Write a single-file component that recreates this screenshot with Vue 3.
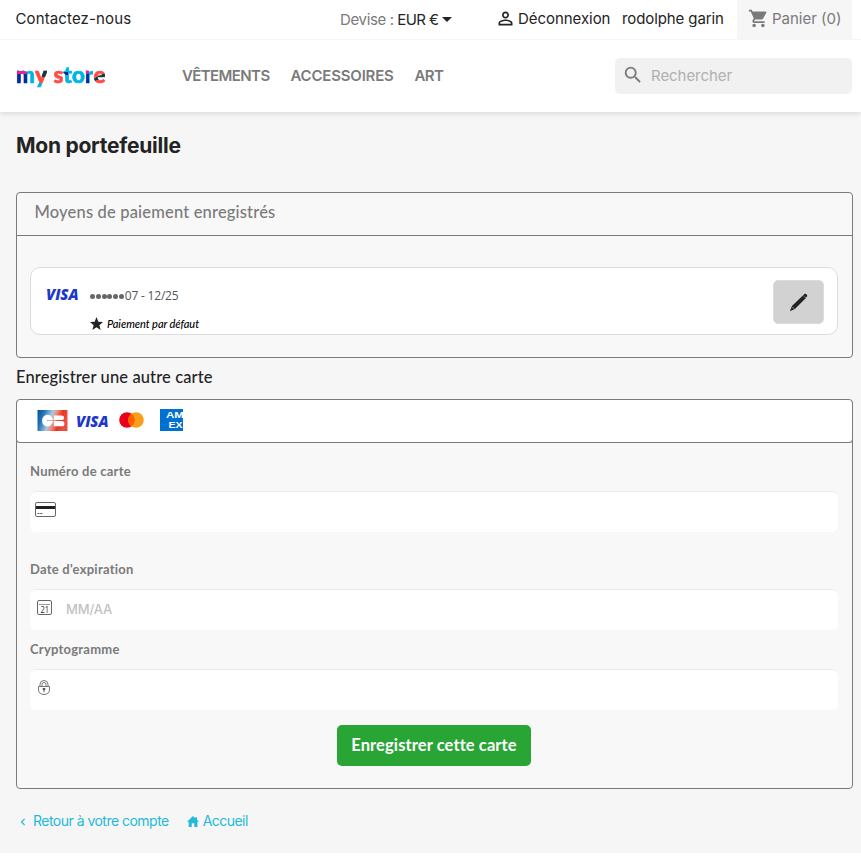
<script setup>
import { ref } from 'vue'

const menu = ['VÊTEMENTS', 'ACCESSOIRES', 'ART']
const logo = ['m', 'y', 's', 't', 'o', 'r', 'e']
const number = ref('')
const expiry = ref('')
const crypto = ref('')
const search = ref('')
</script>

<template>
  <div class="page">
    <header class="header">
      <div class="topbar">
        <a class="contact">Contactez-nous</a>
        <div class="currency"><span class="muted t-devise">Devise :</span><span class="t-eur">EUR €</span><i class="caret"></i></div>
        <div class="user">
          <svg class="person" viewBox="0 0 24 24"><path fill-rule="evenodd" d="M12 5.900a2.100 2.100 0 1 1 0 4.200 2.100 2.100 0 0 1 0-4.200M12 4C9.790 4 8 5.790 8 8s1.790 4 4 4 4-1.790 4-4-1.790-4-4-4zm0 10.900c2.970 0 6.100 1.460 6.100 2.100v1.100H5.900V17c0-.640 3.130-2.100 6.100-2.100M12 13c-2.670 0-8 1.340-8 4v3h16v-3c0-2.660-5.330-4-8-4z"/></svg>
          <a class="t-logout">Déconnexion</a>
        </div>
        <a class="account">rodolphe garin</a>
        <div class="cart">
          <svg class="cart-icon" viewBox="0 0 24 24"><path d="M7 18c-1.100 0-1.990.900-1.990 2S5.900 22 7 22s2-.900 2-2-.900-2-2-2zM1 2v2h2l3.600 7.590-1.350 2.450c-.160.280-.250.610-.250.960 0 1.100.900 2 2 2h12v-2H7.420c-.140 0-.250-.110-.250-.250l.030-.120.900-1.630h7.450c.750 0 1.410-.410 1.750-1.030l3.580-6.490A1 1 0 0 0 20 4H5.210l-.940-2H1zm16 16c-1.100 0-1.990.900-1.990 2s.890 2 1.990 2 2-.900 2-2-.900-2-2-2z"/></svg>
          <span>Panier (0)</span>
        </div>
      </div>
      <div class="mainbar">
        <a class="logo"><span v-for="l in logo" :key="l" :class="['ltr', 'ltr-' + l]">{{ l }}</span></a>
        <nav class="menu"><a v-for="(m, i) in menu" :key="m" :class="'item' + i">{{ m }}</a></nav>
        <label class="search">
          <svg viewBox="0 0 24 24"><path d="M15.500 14h-.790l-.280-.270A6.470 6.470 0 0 0 16 9.500 6.500 6.500 0 1 0 9.500 16c1.610 0 3.090-.590 4.230-1.570l.270.280v.790l5 4.990L20.490 19l-4.990-5zm-6 0a4.500 4.500 0 1 1 0-9 4.500 4.500 0 0 1 0 9z"/></svg>
          <input v-model="search" placeholder="Rechercher" />
        </label>
      </div>
    </header>

    <main class="wrapper">
      <h1>Mon portefeuille</h1>

      <section class="card saved">
        <div class="card-head">Moyens de paiement enregistrés</div>
        <div class="method">
          <span class="visa">VISA</span>
          <div class="info">
            <div class="num"><i v-for="n in 6" :key="n" class="dot"></i><span>07 - 12/25</span></div>
            <div class="default">
              <svg viewBox="0 0 24 24"><path d="M12 0l3.400 8.700 8.600.500-6.700 5.800 2.300 9L12 19l-7.600 5 2.300-9L0 9.200l8.600-.500z"/></svg>
              <em>Paiement par défaut</em>
            </div>
          </div>
          <button class="edit">
            <svg viewBox="0 0 20 20"><path d="M15.900 1.200c.700-.700 1.500-.600 2.100-.100l.800.800c.500.600.600 1.400-.100 2.100l-1.200 1.100-2.700-2.800zM14.600 2.500l3 3L6.200 16.900 1 19.200l2.100-5.500z"/><path class="glint" d="M3.300 14.500l2.100 2.100"/></svg>
          </button>
        </div>
      </section>

      <h2>Enregistrer une autre carte</h2>

      <section class="card form">
        <div class="brands">
          <svg class="cb" viewBox="0 0 30 21">
            <defs>
              <linearGradient id="cbg" x1="0" y1="0" x2="1" y2=".25"><stop offset="0" stop-color="#0b4f96"/><stop offset=".22" stop-color="#2072b8"/><stop offset=".5" stop-color="#a9cbe2"/><stop offset=".64" stop-color="#f08a78"/><stop offset=".82" stop-color="#ea3323"/><stop offset="1" stop-color="#e8503f"/></linearGradient>
            </defs>
            <rect width="30" height="21" fill="url(#cbg)"/>
            <path fill="#fff" d="M9.500 4.700c3 0 5.300 1.700 6 5.300H9.500v1h6c-.700 3.500-3 5.500-6 5.500a6 6 0 0 1 0-11.800zM16.300 5.500h8a2.300 2.300 0 0 1 0 4.600h-8zM16.300 11.100h8a2.600 2.600 0 0 1 0 5.200h-8z"/>
          </svg>
          <span class="visa">VISA</span>
          <svg class="mc" viewBox="0 0 25 16"><circle cx="8" cy="8" r="7.800" fill="#eb001b"/><circle cx="17" cy="8" r="7.800" fill="#f79e1b"/><path fill="#ff5f00" d="M12.500 1.600a7.800 7.800 0 0 1 0 12.800 7.800 7.800 0 0 1 0-12.800z"/></svg>
          <svg class="amex" viewBox="0 0 23 22"><rect width="23" height="22" fill="#0070d1"/><text x="6" y="9.300" textLength="18" lengthAdjust="spacingAndGlyphs">AM</text><text x="8.500" y="18.500" textLength="14" lengthAdjust="spacingAndGlyphs">EX</text></svg>
        </div>
        <div class="fields">
          <label class="lbl">Numéro de carte</label>
          <div class="field f1">
            <svg class="i-card" viewBox="0 0 21 15"><rect x=".5" y=".5" width="20" height="14" rx="1.500" fill="#fff" stroke="#666"/><path fill="#222" d="M1 4h19v3H1z"/><path stroke="#555" stroke-dasharray="2 .8" d="M2.500 11.500h5.500"/></svg>
            <input v-model="number" />
          </div>
          <label class="lbl">Date d'expiration</label>
          <div class="field f2">
            <svg class="i-cal" viewBox="0 0 15 15"><rect x=".5" y=".5" width="14" height="14" rx="1.500" fill="#fff" stroke="#666"/><path stroke="#999" d="M2 4.500h11"/><text x="3.500" y="12.500" textLength="8.500" lengthAdjust="spacingAndGlyphs">21</text></svg>
            <input v-model="expiry" placeholder="MM/AA" />
          </div>
          <label class="lbl">Cryptogramme</label>
          <div class="field f3">
            <svg class="i-lock" viewBox="0 0 12 15"><path fill="none" stroke="#777" d="M.5 6.500h11v3.500c0 2.500-2.500 4.500-5.500 4.500S.5 12.500.5 10zM2 6V4.500a4 4 0 0 1 8 0V6M4 6V4.500a2 2 0 0 1 4 0V6"/><path fill="none" stroke="#555" d="M5 8.500h2v1H5zM6 9.500v2.700"/></svg>
            <input v-model="crypto" />
          </div>
          <button class="submit">Enregistrer cette carte</button>
        </div>
      </section>

      <footer class="links">
        <a class="back"><svg class="chev" viewBox="0 0 6 8"><path fill="none" stroke="currentColor" stroke-width="1.200" d="M4.600 1L1.500 4l3.100 3"/></svg><span>Retour à votre compte</span></a>
        <a class="home"><svg viewBox="0 0 12 11"><path fill="currentColor" d="M6 0l2.300 2.200V1.200h1.700v2.600l2 1.900h-1.600V11H7.300V7.300H4.700V11H1.700V5.700H0z"/></svg><span>Accueil</span></a>
      </footer>
    </main>
  </div>
</template>

<style>
body { background: #fff; }
</style>

<style scoped>
* { box-sizing: border-box; }
.page { width: 861px; height: 868px; overflow: hidden; font-family: Inter, "Liberation Sans", sans-serif; color: #232323; white-space: nowrap; }
input, button { font: inherit; border: 0; padding: 0; margin: 0; background: none; outline: 0; min-width: 0; }
svg { display: block; flex: none; }
.header { position: relative; height: 112px; background: #fff; box-shadow: 0 2px 5px rgba(0, 0, 0, .11); }
.topbar { height: 40px; display: flex; border-bottom: 1px solid #f5f5f5; padding: 0 9px 0 15.500px; font-size: 15px; line-height: 37px; }
.muted { color: #7a7a7a; }
.contact { width: 324.500px; letter-spacing: .13px; }
.currency { width: 156px; display: flex; align-items: center; gap: 3.500px; height: 38px; }
.t-devise { letter-spacing: -.35px; }
.t-eur { letter-spacing: -.55px; }
.caret { border: 5px solid transparent; border-top-color: #232323; border-bottom: 0; }
.user { display: flex; width: 126px; gap: 3px; }
.person { width: 21px; height: 21px; margin: 8px -.5px 0 -1.500px; fill: #232323; }
.t-logout { letter-spacing: -.05px; }
.account { letter-spacing: -.1px; flex: 1; }
.cart { width: 115px; height: 39px; background: #f6f6f6; color: #7a7a7a; display: flex; padding-left: 11px; gap: 3px; }
.cart-icon { width: 21px; height: 21px; margin-top: 8px; fill: #7a7a7a; }
.mainbar { height: 72px; display: flex; padding: 0 9px 0 16px; }
.logo { width: 166px; display: flex; align-items: flex-start; font: 900 22.500px/30px Lato, sans-serif; padding-top: 20px; }
.ltr { background-clip: text; -webkit-background-clip: text; color: transparent; -webkit-text-stroke: .7px transparent; }
.ltr-m { background-image: linear-gradient(180deg, #e5259f 48%, transparent 48%), linear-gradient(90deg, #0a2896 60%, #00b5e2 60%); background-size: 60% 100%, 100% 100%; background-repeat: no-repeat; }
.ltr-y { background-image: linear-gradient(180deg, #063b4c 56%, transparent 56%), linear-gradient(180deg, #ff4b44 76%, #00b5e2 76%); background-size: 45% 100%, 100% 100%; background-position: 100% 0, 0 0; background-repeat: no-repeat; margin-right: 6.500px; }
.ltr-s { background-color: #ff4b44; }
.ltr-t { background-image: linear-gradient(180deg, transparent 40%, #0a2896 40% 49%, transparent 49%), linear-gradient(#00b5e2, #00b5e2); background-size: 60% 100%, 100% 100%; background-repeat: no-repeat; }
.ltr-o { background-color: #00b5e2; }
.ltr-r { background-image: linear-gradient(180deg, #e5259f 48%, transparent 48%), linear-gradient(90deg, #0a2896 55%, #00b5e2 55%); background-size: 50% 100%, 100% 100%; background-repeat: no-repeat; }
.ltr-e { background-image: linear-gradient(155deg, #ff4b44 53%, #063b4c 53% 62%, #ff4b44 62%); }
.menu { display: flex; width: 433px; font-size: 15px; font-weight: 600; line-height: 72px; color: #7a7a7a; }
.item0 { width: 108.500px; letter-spacing: -.6px; }
.item1 { width: 124px; letter-spacing: -.2px; }
.item2 { letter-spacing: -.6px; }
.search { width: 237px; height: 36px; margin-top: 18px; background: #f1f1f1; border-radius: 5px; display: flex; align-items: center; padding-left: 7px; gap: 7px; }
.search svg { width: 22px; height: 22px; fill: #7a7a7a; margin-top: -3px; }
.search input { font-size: 15px; letter-spacing: -.05px; width: 180px; margin-top: -2px; }
.search input::placeholder { color: #b0b0b0; opacity: 1; }
.wrapper { height: 741px; background: #f6f6f6; padding: 0 8px 0 16px; }
h1 { margin: 0; height: 80px; font-size: 21px; line-height: 68px; font-weight: 700; letter-spacing: -.25px; }
.card { border: 1px solid #7a7a7a; border-radius: 4px; background: #f8f8f8; }
.saved { height: 166px; }
.card-head { height: 43px; border-bottom: 1px solid #7a7a7a; padding-left: 17.500px; font: 500 16.500px/39px Lato, sans-serif; letter-spacing: .17px; color: #7a7a7a; }
.method { display: flex; margin: 31px 14px 0 13px; height: 68px; border: 1px solid #dcdcdc; border-radius: 10px; background: #fff; padding: 0 13px 0 15px; }
.visa { font: italic 800 15px/20px "Open Sans", sans-serif; color: #1f38cc; width: 32px; letter-spacing: -.1px; }
.method .visa { margin-top: 16px; width: 44px; }
.info { flex: 1; }
.num { display: flex; align-items: center; height: 20px; margin-top: 18px; font: 12px/20px "Open Sans", sans-serif; letter-spacing: -.2px; color: #555; }
.dot { width: 5px; height: 5px; border-radius: 50%; background: #666; margin-right: .8px; }
.default { display: flex; align-items: center; gap: 4px; height: 16px; margin-top: 10px; font: 500 11px/16px Lato, sans-serif; letter-spacing: -.05px; color: #000; }
.default svg { width: 13px; height: 13px; fill: #232323; margin-top: -2px; }
.edit { width: 51px; height: 44px; margin-top: 12px; border: 1px solid #dcdcdc; border-radius: 5px; background: #d2d2d2; display: flex; align-items: center; justify-content: center; }
.edit svg { width: 19px; height: 19px; fill: #232323; }
.glint { stroke: #d2d2d2; stroke-width: .7; }
h2 { margin: 0; height: 41px; font: 500 16.500px/39px Lato, sans-serif; letter-spacing: .12px; }
.form { height: 390px; }
.brands { height: 43px; margin: 0 -1px; border: 1px solid #7a7a7a; border-top: 0; border-radius: 4px; background: #fff; display: flex; align-items: center; padding: 0 0 2px 20px; }
.cb { width: 31px; height: 21px; }
.brands .visa { margin: 2px 11px 0 8px; }
.mc { width: 25px; height: 16px; }
.amex { width: 23px; height: 22px; margin-left: 16px; margin-top: -1px; overflow: hidden; }
.amex text { font: 700 8.500px "Liberation Sans", sans-serif; fill: #fff; }
.fields { padding: 0 14px 0 13px; display: flex; flex-direction: column; font-family: Lato, sans-serif; }
.lbl { height: 24px; line-height: 20px; margin-top: 15px; padding-top: 3px; font-size: 13px; font-weight: 700; letter-spacing: .24px; color: #7a7a7a; }
.field { height: 41px; border-radius: 6px; background: #fff; border-top: 1px solid #ececec; display: flex; padding-left: 5px; }
.f1, .f2, .f3 { margin-top: 9px; }
.f1 + .lbl { margin-top: 24px; }
.f2 + .lbl { margin-top: 6px; }
.field input { flex: 1; font: 500 13px/38px Inter, sans-serif; letter-spacing: -.15px; height: 38px; }
.field input::placeholder { color: #c2c2c2; opacity: 1; }
.i-card { width: 21px; height: 15px; margin-top: 10px; }
.i-cal { width: 15px; height: 15px; margin: 10px 14px 0 2px; }
.i-cal text { font: 8.500px "Open Sans", sans-serif; fill: #222; }
.i-lock { width: 12px; height: 15px; margin: 10px 0 0 3px; }
.submit { width: 194px; height: 41px; margin: 15px auto 0; padding-bottom: 2px; border-radius: 5px; background: #28a535; color: #fff; font: 700 16.500px/38px Lato, sans-serif; letter-spacing: .1px; }
.links { display: flex; gap: 18px; padding: 22px 0 0 4px; height: 60px; font-size: 14px; line-height: 20px; color: #24b9d7; }
.links a { display: flex; }
.chev { width: 6px; height: 8px; margin: 7px 7px 0 0; }
.home svg { width: 12px; height: 11px; margin: 5px 4px 0 0; }
.back { letter-spacing: -.52px; }
.home { letter-spacing: -.55px; }
</style>
